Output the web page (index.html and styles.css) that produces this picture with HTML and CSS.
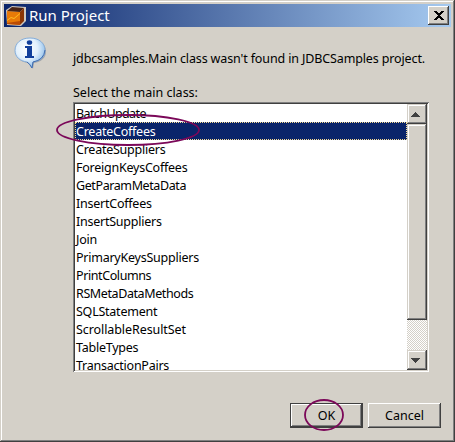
FILE: index.html
```
<!DOCTYPE html>
<html lang="en">
<head>
<meta charset="utf-8">
<title>Run Project</title>
<link rel="stylesheet" href="styles.css">
</head>
<body>
<div class="window">
  <header class="titlebar">
    <svg class="app-icon" width="20" height="20" viewBox="0 0 20 20">
      <path d="M0 4 6 0 20 1V15L15 20 1 19Z" fill="#cfc8bf"/>
      <path d="M1 5 14 6V19L1 18Z" fill="#e87a08"/>
      <path d="M1 5 6 1 18 2 14 6Z" fill="#4a2415"/>
      <path d="M14 6 18 2V15L14 19Z" fill="#8a3505"/>
      <path d="M1 14 5 11 8 12 14 7V8L8 13 5 12 1 15Z" fill="#ffbd24"/>
      <path d="M1 17 14 15V19L1 18Z" fill="#b94b05"/>
    </svg>
    <h1 class="title">Run Project</h1>
    <button class="close" aria-label="Close">
      <svg width="10" height="9" viewBox="0 0 10 9" shape-rendering="crispEdges"><path d="M0 0h3v1h1v1h2V1h1V0h3v1H9v1H8v1H7v1H6v1h1v1h1v1h1v1h1v1H7V8H6V7H4v1H3v1H0V8h1V7h1V6h1V5h1V4H3V3H2V2H1V1H0Z"/></svg>
    </button>
  </header>
  <main class="content">
    <svg class="info" width="34" height="34" viewBox="0 0 34 34">
      <defs><radialGradient id="bubble" cx=".4" cy=".35" r=".65"><stop offset="0" stop-color="#fff"/><stop offset=".55" stop-color="#e2f0fc"/><stop offset="1" stop-color="#8ebde9"/></radialGradient></defs>
      <path d="M17 2C8 2 2 7 2 14.500C2 21 7 25 14 26Q17 28 19 32L20 26C27 25 32 21 32 14.500C32 7 26 2 17 2Z" fill="#777f91" opacity=".55"/>
      <path d="M16 1C7 1 1 6 1 13.500C1 20 6 24 13 25Q16 27 18 31L19 25C26 24 31 20 31 13.500C31 6 25 1 16 1Z" fill="url(#bubble)" stroke="#86aeda"/>
      <path d="M19 25Q30 23 31 13M13 25Q16 27 18 31L19 25" fill="none" stroke="#416cae"/>
      <ellipse cx="15.500" cy="5.500" rx="2.700" ry="2.300" fill="#123f9b"/>
      <path d="M11 9H18V19H20V21H11V19H13V11H11Z" fill="#123f9b"/>
    </svg>
    <section class="body">
      <p class="message">jdbcsamples.Main class wasn't found in JDBCSamples project.</p>
      <p class="label">Select the main class:</p>
      <div class="listbox">
        <ul class="items">
          <li class="tighter">BatchUpdate</li>
          <li class="selected">CreateCoffees</li>
          <li>CreateSuppliers</li>
          <li>ForeignKeysCoffees</li>
          <li class="tight">GetParamMetaData</li>
          <li>InsertCoffees</li>
          <li>InsertSuppliers</li>
          <li>Join</li>
          <li>PrimaryKeysSuppliers</li>
          <li class="tight">PrintColumns</li>
          <li class="tight">RSMetaDataMethods</li>
          <li>SQLStatement</li>
          <li class="loose">ScrollableResultSet</li>
          <li>TableTypes</li>
          <li>TransactionPairs</li>
        </ul>
        <div class="scrollbar">
          <div class="raised up"><svg width="9" height="5" viewBox="0 0 9 5" shape-rendering="crispEdges"><path d="M4 0h1v1h1v1h1v1h1v1h1v1H0V4h1V3h1V2h1V1h1Z"/></svg></div>
          <div class="raised thumb"></div>
          <div class="track"></div>
          <div class="raised down"><svg width="9" height="5" viewBox="0 0 9 5" shape-rendering="crispEdges"><path d="M0 0h9v1H8v1H7v1H6v1H5v1H4V4H3V3H2V2H1V1H0Z"/></svg></div>
        </div>
      </div>
    </section>
  </main>
  <footer class="actions">
    <button class="btn ok"><span>OK</span></button>
    <button class="btn"><span>Cancel</span></button>
  </footer>
  <svg class="marks" width="455" height="442" viewBox="0 0 455 442">
    <ellipse cx="128" cy="130" rx="71" ry="15"/>
    <ellipse cx="324" cy="415" rx="19" ry="15"/>
  </svg>
</div>
</body>
</html>
```
FILE: styles.css
```
* { box-sizing: border-box; }
body { margin: 0; font: 12.5px "Noto Sans", sans-serif; color: #000; }
p, ul, h1 { margin: 0; padding: 0; font-weight: normal; }
button { font: inherit; color: inherit; padding: 0; }
.window {
  position: relative; width: 455px; height: 442px; padding: 4px; background: #d4d0c8;
  box-shadow: inset -1px -1px #404040, inset 1px 1px #d4d0c8, inset -2px -2px #808080, inset 2px 2px #fff;
}
.titlebar { display: flex; align-items: center; width: 447px; height: 23px; padding: 0 2px; background: linear-gradient(90deg, #0a246a, #a6caf0); }
.title { margin-left: 3px; color: #fff; font-size: 15px; line-height: 23px; }
.close {
  display: flex; align-items: center; justify-content: center; width: 21px; height: 19px; margin-left: auto; border: 0; background: #d4d0c8;
  box-shadow: inset -1px -1px #404040, inset 1px 1px #fff, inset -2px -2px #808080;
}
.content { display: flex; padding: 10px 0 0 10px; }
.info { flex: none; margin-right: 25px; }
.body { width: 356px; }
.message { height: 35px; padding-top: 13px; line-height: 18px; letter-spacing: -.13px; white-space: nowrap; }
.label { height: 30px; padding-top: 12px; line-height: 18px; }
.listbox {
  display: flex; width: 356px; height: 270px; padding: 2px; background: #fff;
  box-shadow: inset 1px 1px #808080, inset -1px -1px #fff, inset 2px 2px #404040, inset -2px -2px #d4d0c8;
}
.items { flex: 1; height: 266px; overflow: hidden; list-style: none; letter-spacing: -.24px; }
.items li { height: 18px; line-height: 20px; padding-left: 1px; white-space: nowrap; }
.items .tight { letter-spacing: -.4px; }
.items .tighter { letter-spacing: -.6px; }
.items .loose { letter-spacing: -.08px; }
.items .selected { padding-left: 0; border: 1px dotted #f5db95; line-height: 18px; background: #0a246a; color: #fff; }
.scrollbar { display: flex; flex-direction: column; width: 20px; }
.raised {
  display: flex; align-items: center; justify-content: center; background: #d4d0c8; fill: #404040;
  box-shadow: inset -1px -1px #404040, inset 1px 1px #d4d0c8, inset -2px -2px #808080, inset 2px 2px #fff;
}
.up, .down { height: 20px; }
.up { padding-right: 3px; }
.down { padding-right: 3px; }
.thumb { height: 196px; }
.track { height: 30px; background: repeating-conic-gradient(#d4d0c8 0 25%, #fff 0 50%) 0 0 / 2px 2px; }
.actions { display: flex; gap: 5px; padding: 31px 0 0 286px; }
.btn {
  width: 73px; height: 25px; border: 0; background: #d4d0c8;
  box-shadow: inset -1px -1px #404040, inset 1px 1px #fff, inset -2px -2px #808080;
}
.ok { box-shadow: inset 0 0 0 1px #404040, inset -2px -2px #404040, inset 2px 2px #fff, inset -3px -3px #808080; }
.marks { position: absolute; top: 0; left: 0; fill: none; stroke: #7b0859; stroke-width: 1.8; pointer-events: none; }
```
